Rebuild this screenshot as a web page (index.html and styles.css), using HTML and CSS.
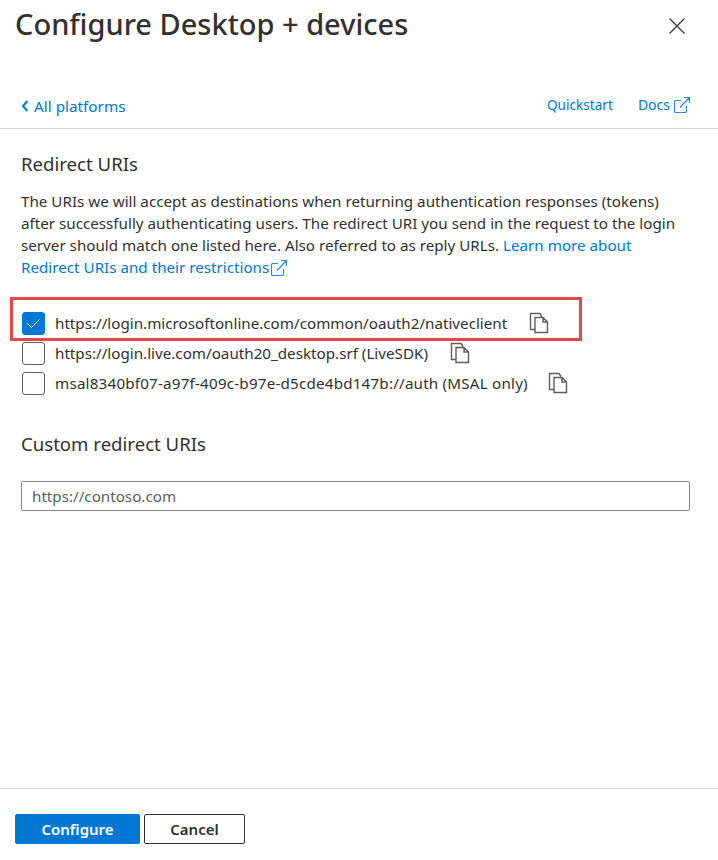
FILE: index.html
```html
<!DOCTYPE html>
<html lang="en">
<head>
<meta charset="utf-8">
<title>Configure Desktop + devices</title>
<link rel="stylesheet" href="styles.css">
</head>
<body>
<div class="panel">
  <header class="title-bar">
    <h1 class="title">Configure Desktop + devices</h1>
    <button class="close" aria-label="Close">
      <svg width="16" height="16" viewBox="0 0 16 16"><path d="M.5.5l15 15M15.5.5l-15 15" fill="none" stroke="#323130" stroke-width="1.2"/></svg>
    </button>
  </header>
  <nav class="nav-bar">
    <a class="back">
      <svg width="8" height="12" viewBox="0 0 8 12"><path d="M6.500 1L2 6l4.500 5" fill="none" stroke="#0078d4" stroke-width="2"/></svg>
      <span>All platforms</span>
    </a>
    <div class="nav-links">
      <a class="link quick">Quickstart</a>
      <a class="link docs">Docs<svg class="ext" width="16" height="16" viewBox="0 0 16 16"><path d="M7 3.500H2a1.500 1.500 0 0 0-1.500 1.500v9A1.500 1.500 0 0 0 2 15.500h9a1.500 1.500 0 0 0 1.500-1.500V9M6 10.500L15.500.5M10 .5h5.500V6" fill="none" stroke="#2b88d8" stroke-width="1.200"/></svg></a>
    </div>
  </nav>
  <main class="content">
    <h2 class="heading">Redirect URIs</h2>
    <p class="desc">The URIs we will accept as destinations when returning authentication responses (tokens) after successfully authenticating users. The redirect URI you send in the request to the login server should match one listed here. Also referred to as reply URLs. <a class="link">Learn more about</a><br><a class="link">Redirect URIs and their restrictions<svg class="ext" width="16" height="16" viewBox="0 0 16 16"><path d="M7 3.500H2a1.500 1.500 0 0 0-1.500 1.500v9A1.500 1.500 0 0 0 2 15.500h9a1.500 1.500 0 0 0 1.500-1.500V9M6 10.500L15.500.5M10 .5h5.500V6" fill="none" stroke="#2b88d8" stroke-width="1.200"/></svg></a></p>
    <div class="uri-list">
      <div class="highlight"></div>
      <div class="uri">
        <span class="check checked"><svg width="13" height="9" viewBox="0 0 13 9"><path d="M.5 4.500L4.500 8.500 12.500.5" fill="none" stroke="#fff" stroke-width="1"/></svg></span>
        <span class="uri-text">https://login.microsoftonline.com/common/oauth2/nativeclient</span>
        <svg class="copy" width="20" height="22" viewBox="0 0 20 22"><path d="M6 17.500H1.500V1.500H11l2 3M6 5.500h8l4.500 4.500v10.500H6zM14 5.500V10h4.500" fill="none" stroke="#605e5c" stroke-width="1.400"/></svg>
      </div>
      <div class="uri">
        <span class="check"></span>
        <span class="uri-text">https://login.live.com/oauth20_desktop.srf (LiveSDK)</span>
        <svg class="copy" width="20" height="22" viewBox="0 0 20 22"><path d="M6 17.500H1.500V1.500H11l2 3M6 5.500h8l4.500 4.500v10.500H6zM14 5.500V10h4.500" fill="none" stroke="#605e5c" stroke-width="1.400"/></svg>
      </div>
      <div class="uri">
        <span class="check"></span>
        <span class="uri-text uri-wide">msal8340bf07-a97f-409c-b97e-d5cde4bd147b://auth (MSAL only)</span>
        <svg class="copy" width="20" height="22" viewBox="0 0 20 22"><path d="M6 17.500H1.500V1.500H11l2 3M6 5.500h8l4.500 4.500v10.500H6zM14 5.500V10h4.500" fill="none" stroke="#605e5c" stroke-width="1.400"/></svg>
      </div>
    </div>
    <h2 class="heading heading-custom">Custom redirect URIs</h2>
    <input class="text-input" type="text" placeholder="https://contoso.com">
  </main>
  <footer class="footer">
    <button class="btn primary">Configure</button>
    <button class="btn secondary">Cancel</button>
  </footer>
</div>
</body>
</html>
```

FILE: styles.css
```css
* { box-sizing: border-box; }
html, body { margin: 0; padding: 0; background: #fff; }
body { font-family: "Noto Sans", "Open Sans", sans-serif; color: #323130; }
.panel { width: 718px; height: 860px; display: flex; flex-direction: column; overflow: hidden; }
.title-bar { height: 94px; padding: 6px 33px 0 15px; display: flex; justify-content: space-between; align-items: flex-start; }
.title { margin: 0; font-size: 29px; line-height: 36px; font-weight: 500; }
.close { margin: 12px 0 0; padding: 0; border: 0; background: none; width: 16px; height: 16px; display: block; }
.close svg { display: block; }
.nav-bar { height: 35px; padding: 0 28px 0 21px; display: flex; justify-content: space-between; align-items: flex-start; border-bottom: 1px solid #d9d9d9; }
.back { display: flex; align-items: center; gap: 5px; color: #0078d4; font-size: 15.300px; line-height: 24px; }
.nav-links { display: flex; gap: 25px; }
.link { color: #0078d4; }
.nav-links .link { font-size: 14px; line-height: 22px; }
.nav-links .quick { font-size: 13.600px; }
.ext { margin-left: 2px; vertical-align: -3px; }
.docs .ext { margin-left: 4px; }
.content { flex: 1; padding: 23px 28px 0 21px; }
.heading { margin: 0; font-size: 18.600px; line-height: 24px; font-weight: 400; }
.desc { margin: 14px 0 0; font-size: 15.200px; line-height: 22px; }
.uri-list { position: relative; margin-top: 30px; }
.highlight { position: absolute; left: -11px; top: -11px; width: 572px; height: 44px; border: 3px solid #e8474a; }
.uri { display: flex; align-items: center; height: 30px; font-size: 15.200px; }
.check { width: 23px; height: 23px; margin: 0 10px 0 1px; border: 1px solid #605e5c; border-radius: 3px; display: flex; align-items: center; justify-content: center; flex: none; }
.checked { background: #0078d4; border-color: #0078d4; }
.uri-text { white-space: nowrap; }
.uri-wide { letter-spacing: 0.200px; margin-right: -2px; }
.copy { margin-left: 22px; flex: none; }
.heading-custom { margin-top: 34px; }
.text-input { display: block; width: 669px; height: 30px; margin-top: 25px; padding: 0 10px; border: 1px solid #8a8886; border-radius: 2px; font: 15.200px "Noto Sans", sans-serif; color: #323130; }
.text-input::placeholder { color: #605e5c; opacity: 1; }
.footer { height: 72px; padding: 25px 15px 0; border-top: 1px solid #e1e1e1; display: flex; gap: 4px; align-items: flex-start; }
.btn { height: 30px; border-radius: 2px; font: 600 15px "Noto Sans", sans-serif; padding: 0; }
.primary { width: 125px; background: #0078d4; border: 1px solid #0078d4; color: #fff; }
.secondary { width: 101px; background: #fff; border: 1px solid #323130; color: #323130; }
```
